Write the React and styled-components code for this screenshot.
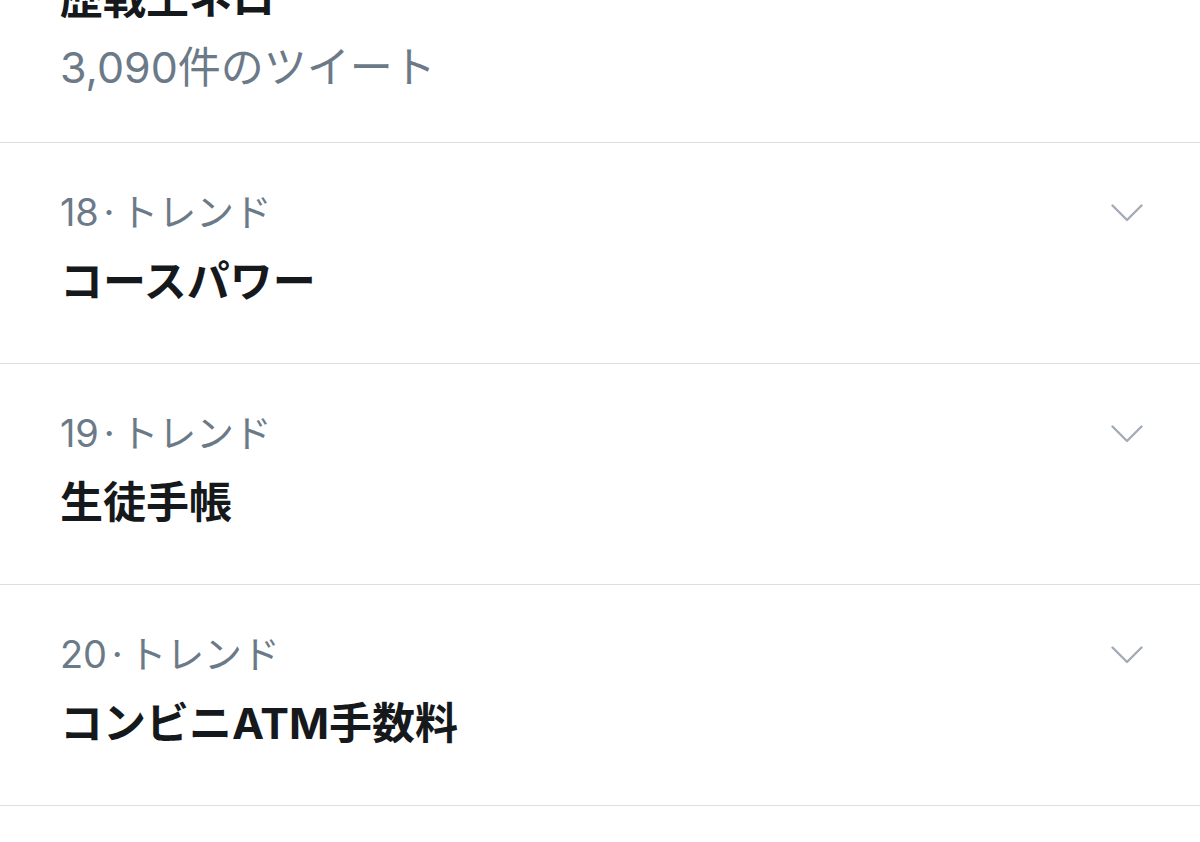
import styled, { createGlobalStyle } from "styled-components";

const Global = createGlobalStyle`
  html, body {
    margin: 0;
    padding: 0;
    background: #ffffff;
    overflow: hidden;
  }
  body {
    font-family: "Inter", "Noto Sans CJK JP", sans-serif;
  }
`;

const Page = styled.div`
  width: 1200px;
  height: 842px;
  overflow: hidden;
`;

const List = styled.div`
  display: flex;
  flex-direction: column;
  margin-top: -32px;
`;

const Row = styled.div`
  display: flex;
  flex-direction: column;
  padding: ${(p) => (p.$head ? "0 57px 47px 60px" : "44px 57px 52px 60px")};
  border-bottom: 1px solid #dcdde3;
`;

const MetaLine = styled.div`
  display: flex;
  align-items: center;
  justify-content: space-between;
  height: 50px;
`;

const Meta = styled.span`
  font-size: 38px;
  line-height: 50px;
  color: #6c7a88;
  letter-spacing: -0.2px;
`;

const Dot = styled.span`
  margin: 0 6px 0 5px;
`;

const Title = styled.div`
  font-family: "Inter", "Noto Sans CJK JP", sans-serif;
  font-weight: 700;
  font-size: 43px;
  line-height: 60px;
  color: #16191c;
  margin-top: ${(p) => (p.$head ? "0" : "14px")};
`;

const Count = styled.div`
  font-size: 43px;
  line-height: 56px;
  color: #6c7a88;
  margin-top: 11px;
`;

const Chevron = () => (
  <svg width="32" height="20" viewBox="0 0 32 20" fill="none">
    <path
      d="M1.5 3.5 L16 18 L30.5 3.5"
      stroke="#a3acb6"
      strokeWidth="2.4"
      strokeLinecap="round"
      strokeLinejoin="round"
    />
  </svg>
);

const trends = [
  { rank: 18, name: "コースパワー" },
  { rank: 19, name: "生徒手帳" },
  { rank: 20, name: "コンビニATM手数料" },
];

export default function App() {
  return (
    <Page>
      <Global />
      <List>
        <Row $head>
          <Title $head>歴戦王ネロ</Title>
          <Count>3,090件のツイート</Count>
        </Row>
        {trends.map((t) => (
          <Row key={t.rank}>
            <MetaLine>
              <Meta>
                {t.rank}
                <Dot>·</Dot>
                トレンド
              </Meta>
              <Chevron />
            </MetaLine>
            <Title>{t.name}</Title>
          </Row>
        ))}
      </List>
    </Page>
  );
}
